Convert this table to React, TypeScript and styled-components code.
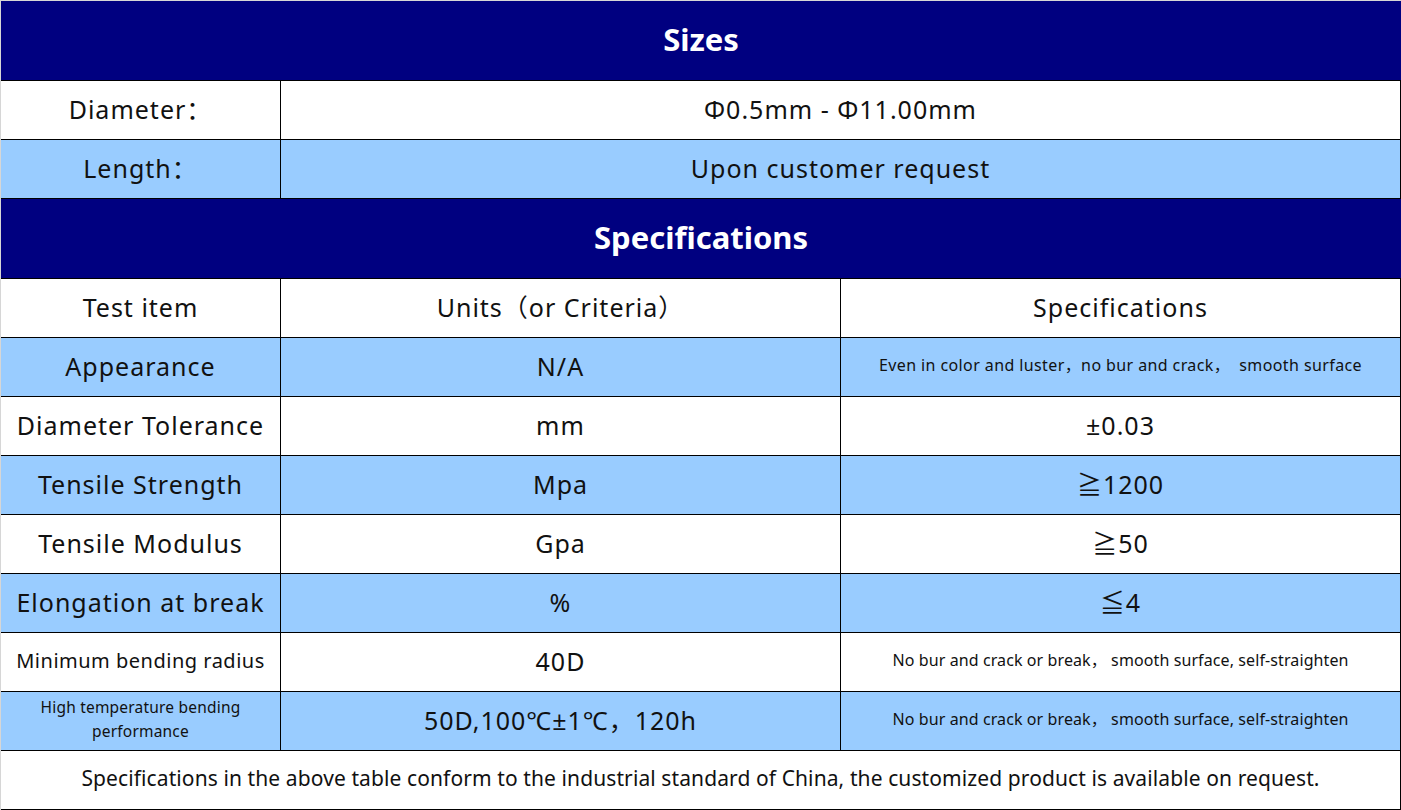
import React from "react";
import styled, { createGlobalStyle } from "styled-components";

const GlobalStyle = createGlobalStyle`
  html, body { margin: 0; padding: 0; background: #ffffff; }
  body { font-family: "Noto Sans", "Noto Sans CJK SC", sans-serif; color: #111; }
`;

const Frame = styled.div`
  width: 1400px;
  height: 809px;
  border-top: 1px solid #d6d6d6;
  border-left: 1px solid #d6d6d6;
  display: flex;
  flex-direction: column;
`;

const SectionHeader = styled.div`
  height: 80px;
  flex: none;
  background: #000080;
  border-bottom: 1px solid #000;
  color: #fff;
  font-weight: 700;
  font-size: 31px;
  padding-bottom: 3px;
  box-sizing: border-box;
  display: flex;
  align-items: center;
  justify-content: center;
`;

const Row = styled.div<{ $blue?: boolean; $cols: string }>`
  display: grid;
  flex: none;
  grid-template-columns: ${(p) => p.$cols};
  height: 59px;
  background: ${(p) => (p.$blue ? "#99ccff" : "#ffffff")};
`;

const Cell = styled.div<{ $size?: number; $lh?: number; $ls?: number }>`
  border-right: 1px solid #000;
  border-bottom: 1px solid #000;
  display: flex;
  align-items: center;
  justify-content: center;
  text-align: center;
  font-size: ${(p) => p.$size ?? 25}px;
  line-height: ${(p) => p.$lh ?? 1.2};
  letter-spacing: ${(p) => p.$ls ?? 1}px;
  padding-bottom: 3px;
  box-sizing: border-box;
  white-space: pre-wrap;
`;

const Footer = styled.div`
  height: 59px;
  flex: none;
  border-right: 1px solid #000;
  border-bottom: 1px solid #000;
  display: flex;
  align-items: center;
  justify-content: center;
  font-size: 21px;
  letter-spacing: 0.1px;
  padding-bottom: 4px;
  box-sizing: border-box;
`;

const THREE = "280px 560px 560px";
const TWO = "280px 1120px";

type SpecRow = {
  item: string;
  itemSize?: number;
  itemLs?: number;
  itemLh?: number;
  unit: string;
  spec: string;
  specSize?: number;
  specLs?: number;
};

const specRows: SpecRow[] = [
  { item: "Appearance", unit: "N/A", spec: "Even in color and luster，no bur and crack，  smooth surface", specSize: 16, specLs: 0.4 },
  { item: "Diameter Tolerance", unit: "mm", spec: "±0.03" },
  { item: "Tensile Strength", unit: "Mpa", spec: "≧1200" },
  { item: "Tensile Modulus", unit: "Gpa", spec: "≧50" },
  { item: "Elongation at break", unit: "%", spec: "≦4" },
  { item: "Minimum bending radius", itemSize: 20, itemLs: 0.5, unit: "40D", spec: "No bur and crack or break， smooth surface, self-straighten", specSize: 16, specLs: 0.1 },
  { item: "High temperature bending\nperformance", itemSize: 15.5, itemLs: 0.2, itemLh: 1.5, unit: "50D,100℃±1℃，120h", spec: "No bur and crack or break， smooth surface, self-straighten", specSize: 16, specLs: 0.1 },
];

export default function App() {
  return (
    <>
      <GlobalStyle />
      <Frame>
        <SectionHeader>Sizes</SectionHeader>
        <Row $cols={TWO}>
          <Cell>Diameter：</Cell>
          <Cell>Φ0.5mm - Φ11.00mm</Cell>
        </Row>
        <Row $cols={TWO} $blue>
          <Cell>Length：</Cell>
          <Cell>Upon customer request</Cell>
        </Row>
        <SectionHeader>Specifications</SectionHeader>
        <Row $cols={THREE}>
          <Cell>Test item</Cell>
          <Cell>Units（or Criteria）</Cell>
          <Cell>Specifications</Cell>
        </Row>
        {specRows.map((r, i) => (
          <Row key={r.item} $cols={THREE} $blue={i % 2 === 0}>
            <Cell $size={r.itemSize} $ls={r.itemLs} $lh={r.itemLh}>{r.item}</Cell>
            <Cell>{r.unit}</Cell>
            <Cell $size={r.specSize} $ls={r.specLs}>{r.spec}</Cell>
          </Row>
        ))}
        <Footer>
          Specifications in the above table conform to the industrial standard of China, the customized product is available on request.
        </Footer>
      </Frame>
    </>
  );
}
